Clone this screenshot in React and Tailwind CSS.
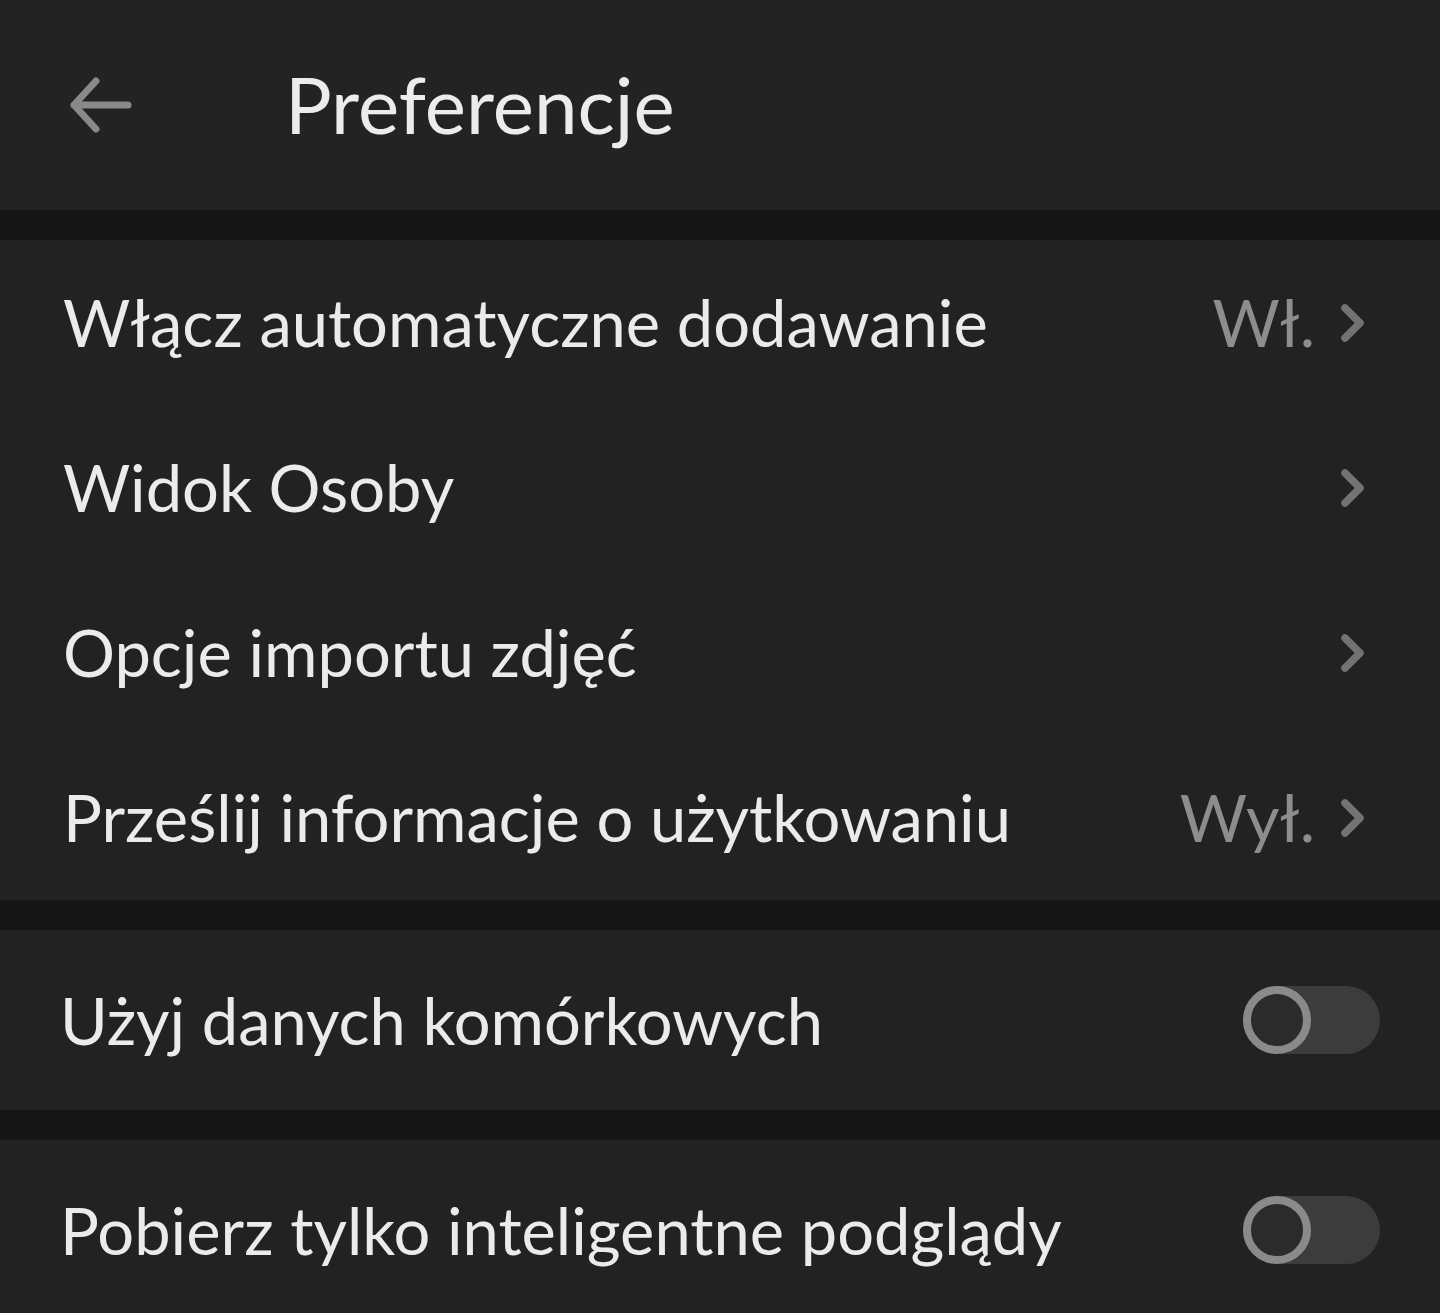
const font = { fontFamily: 'Lato, "Noto Sans", sans-serif' };

function Chevron() {
  return (
    <svg width="26" height="40" viewBox="0 0 26 40" className="shrink-0">
      <path d="M5 5 L20 20 L5 35" fill="none" stroke="#737373" strokeWidth="7.5" strokeLinecap="round" strokeLinejoin="round" />
    </svg>
  );
}

function NavRow({ label, value }) {
  return (
    <div className="h-[165px] flex items-center justify-between pl-[63px] pr-[74px]">
      <span className="text-[65px] text-[#ebebeb] leading-none">{label}</span>
      <div className="flex items-center gap-[25px]">
        {value && <span className="text-[65px] text-[#8d8d8d] leading-none">{value}</span>}
        <Chevron />
      </div>
    </div>
  );
}

function Toggle() {
  return (
    <div className="w-[137px] h-[68px] rounded-full bg-[#3c3c3c] flex items-center">
      <div className="w-[68px] h-[68px] rounded-full border-[8px] border-[#8a8a8a] bg-[#2b2b2b]" />
    </div>
  );
}

function ToggleRow({ label }) {
  return (
    <div className="h-[180px] flex items-center justify-between pl-[60px] pr-[60px]">
      <span className="text-[65px] text-[#ebebeb] leading-none">{label}</span>
      <Toggle />
    </div>
  );
}

export default function App() {
  return (
    <div className="min-h-[1313px] bg-[#161616]" style={font}>
      {/* Header */}
      <div className="h-[210px] bg-[#232323] flex items-center">
        <div className="w-[285px] pl-[66px] flex items-center">
          <svg width="68" height="64" viewBox="0 0 68 64">
            <path d="M62 32 H8 M30 8 L8 32 L30 56" fill="none" stroke="#898989" strokeWidth="7" strokeLinecap="round" strokeLinejoin="round" />
          </svg>
        </div>
        <h1 className="text-[78px] text-[#ececec] leading-none -mt-[2px]">Preferencje</h1>
      </div>

      <div className="h-[30px]" />

      <div className="bg-[#222222]">
        <NavRow label="Włącz automatyczne dodawanie" value="Wł." />
        <NavRow label="Widok Osoby" />
        <NavRow label="Opcje importu zdjęć" />
        <NavRow label="Prześlij informacje o użytkowaniu" value="Wył." />
      </div>

      <div className="h-[30px]" />

      <div className="bg-[#222222]">
        <ToggleRow label="Użyj danych komórkowych" />
      </div>

      <div className="h-[30px]" />

      <div className="bg-[#222222]">
        <ToggleRow label="Pobierz tylko inteligentne podglądy" />
      </div>
    </div>
  );
}
